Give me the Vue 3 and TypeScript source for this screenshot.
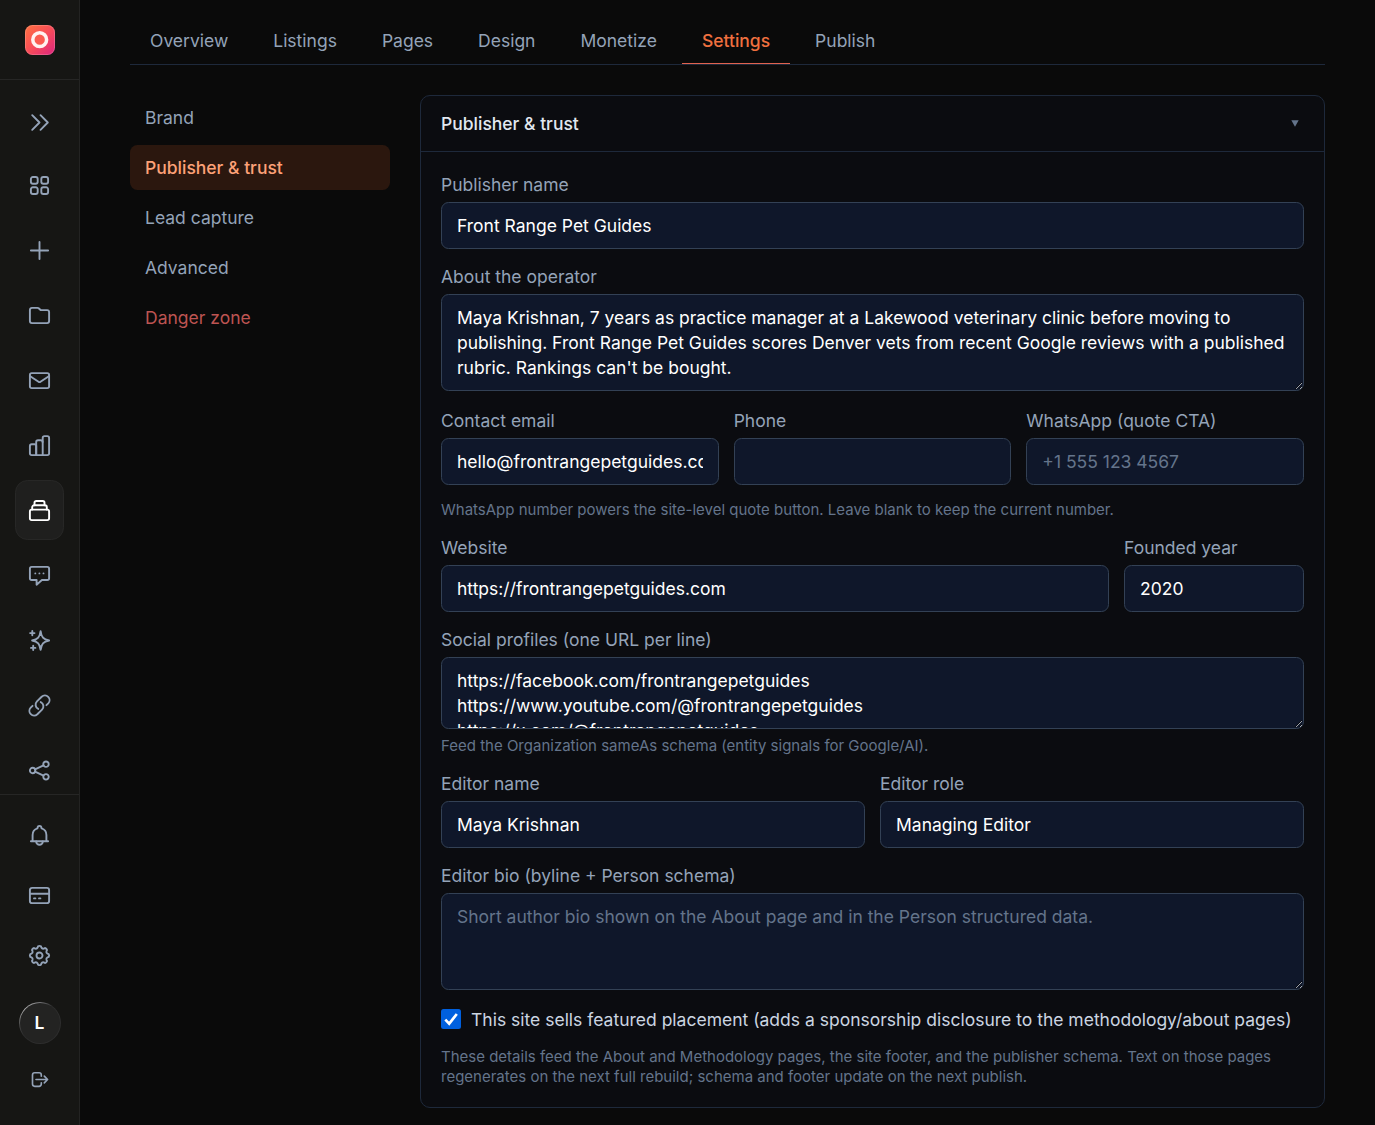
<script setup lang="ts">
import { ref } from 'vue'

interface NavIcon {
  name: string
  paths: string[]
  active?: boolean
}

// Eight-lobed gear outline around the centre of a 25-unit box
function gear(): string {
  const at = (deg: number, r: number) => {
    const a = (deg * Math.PI) / 180
    return `${(12.5 + r * Math.sin(a)).toFixed(2)} ${(12.5 - r * Math.cos(a)).toFixed(2)}`
  }
  let d = `M${at(-9, 9.3)}`
  for (let k = 0; k < 8; k++) {
    const c = k * 45
    d += `Q${at(c, 10.1)} ${at(c + 9, 9.3)}L${at(c + 13, 8.2)}Q${at(c + 22.5, 7)} ${at(c + 32, 8.2)}L${at(c + 36, 9.3)}`
  }
  return d + 'Z'
}

const mainNav: NavIcon[] = [
  {
    name: 'Dashboard',
    paths: [
      'M5.9 4h2.800a2 2 0 0 1 2 2v2.700a2 2 0 0 1-2 2H5.900a2 2 0 0 1-2-2V6a2 2 0 0 1 2-2Z',
      'M16.300 4h2.800a2 2 0 0 1 2 2v2.700a2 2 0 0 1-2 2h-2.800a2 2 0 0 1-2-2V6a2 2 0 0 1 2-2Z',
      'M5.900 14.300h2.800a2 2 0 0 1 2 2v2.700a2 2 0 0 1-2 2H5.900a2 2 0 0 1-2-2v-2.700a2 2 0 0 1 2-2Z',
      'M16.300 14.300h2.800a2 2 0 0 1 2 2v2.700a2 2 0 0 1-2 2h-2.800a2 2 0 0 1-2-2v-2.700a2 2 0 0 1 2-2Z',
    ],
  },
  { name: 'Create', paths: ['M12.500 3.900v17.200M3.900 12.500h17.200'] },
  {
    name: 'Projects',
    paths: ['M4.900 4.900h5.600c.6 0 1.100.2 1.500.6l1 1c.4.4.9.6 1.400.6h5.700a2 2 0 0 1 2 2v9a2 2 0 0 1-2 2H4.900a2 2 0 0 1-2-2V6.900a2 2 0 0 1 2-2Z'],
  },
  {
    name: 'Inbox',
    paths: [
      'M4.700 5.100h15.600a1.800 1.800 0 0 1 1.800 1.800v11.400a1.800 1.800 0 0 1-1.800 1.800H4.700a1.800 1.800 0 0 1-1.800-1.800V6.900a1.800 1.800 0 0 1 1.800-1.800Z',
      'M3.200 8.200l8.300 5.600a1.800 1.800 0 0 0 2 0l8.300-5.600',
    ],
  },
  {
    name: 'Analytics',
    paths: [
      'M4.700 11.300h2.900a1.600 1.600 0 0 1 1.600 1.600v9.200H4.700a1.800 1.800 0 0 1-1.800-1.800V13.100a1.800 1.800 0 0 1 1.800-1.800Z',
      'M9.200 22.100V9a1.800 1.800 0 0 1 1.800-1.800h2.900a1.700 1.700 0 0 1 1.700 1.700',
      'M9.200 22.100h6.500V4.900a1.800 1.800 0 0 1 1.800-1.800h2.800a1.800 1.800 0 0 1 1.800 1.800v15.400a1.800 1.800 0 0 1-1.800 1.800h-4.600',
    ],
  },
  {
    name: 'Sites',
    active: true,
    paths: [
      'M4.700 11.600h15.600a1.800 1.800 0 0 1 1.800 1.800v6.900a1.800 1.800 0 0 1-1.800 1.800H4.700a1.800 1.800 0 0 1-1.800-1.800v-6.900a1.800 1.800 0 0 1 1.800-1.800Z',
      'M5.200 11.600V9.200a1.900 1.900 0 0 1 1.900-1.900h10.800a1.900 1.900 0 0 1 1.900 1.900v2.400',
      'M7.500 7.300V4.700a1.700 1.700 0 0 1 1.700-1.700h6.600a1.700 1.700 0 0 1 1.700 1.700v2.600',
    ],
  },
  {
    name: 'Messages',
    paths: [
      'M4.700 3.900h15.600a1.800 1.800 0 0 1 1.800 1.800v9.500a1.800 1.800 0 0 1-1.800 1.800h-5.400l-5.300 4.700V17H4.700a1.800 1.800 0 0 1-1.800-1.800V5.700a1.800 1.800 0 0 1 1.800-1.800Z',
      'M8.300 10.400h.01M12.400 10.400h.01M16.500 10.400h.01',
    ],
  },
  {
    name: 'Assistant',
    paths: [
      'M13.600 3.100c.8 5.900 2.700 8.400 8.500 9.400-5.800 1-7.700 3.500-8.500 9.400-.8-5.900-2.700-8.400-8.500-9.400 5.800-1 7.700-3.500 8.500-9.400Z',
      'M5.300 2.900v4.400M3.100 5.100h4.400M6.200 17.700v4.400M4 19.900h4.400',
    ],
  },
  {
    name: 'Links',
    paths: ['M13.740 9.050a4.690 4.690 0 0 1 1.290 7.550l-4.690 4.690a4.690 4.690 0 0 1-6.630-6.630l1.830-1.830m13.910-.65 1.830-1.830a4.690 4.690 0 0 0-6.630-6.630l-4.690 4.690a4.690 4.690 0 0 0 1.290 7.550'],
  },
  {
    name: 'Share',
    paths: [
      'M2.900 12.500a2.700 2.700 0 1 0 5.400 0a2.700 2.700 0 1 0-5.400 0Z',
      'M16.300 6.200a2.700 2.700 0 1 0 5.400 0a2.700 2.700 0 1 0-5.400 0Z',
      'M16.300 18.800a2.700 2.700 0 1 0 5.400 0a2.700 2.700 0 1 0-5.400 0Z',
      'M8 11.300l8.500-3.900M8 13.700l8.500 3.900',
    ],
  },
]

const footNav: NavIcon[] = [
  {
    name: 'Notifications',
    paths: [
      'M3.900 18.200h17.200M5.600 18.200V12a7 7 0 0 1 4.800-6.600c.1-1.500.9-2.500 2.100-2.500s2 1 2.100 2.500A7 7 0 0 1 19.400 12v6.200',
      'M9.200 18.500a3.300 3.300 0 0 0 6.600 0',
    ],
  },
  {
    name: 'Billing',
    paths: [
      'M5.100 4.900h14.800a2.200 2.200 0 0 1 2.200 2.200v10.800a2.200 2.200 0 0 1-2.200 2.200H5.100a2.200 2.200 0 0 1-2.200-2.200V7.100a2.200 2.200 0 0 1 2.200-2.200Z',
      'M2.900 10.700h19.200M7 15.400h1.400M12 15.400h1.400',
    ],
  },
  { name: 'Settings', paths: [gear(), 'M9.500 12.500a3 3 0 1 0 6 0a3 3 0 1 0-6 0Z'] },
]

const tabs = ['Overview', 'Listings', 'Pages', 'Design', 'Monetize', 'Settings', 'Publish']
const activeTab = ref('Settings')
const sections = ['Brand', 'Publisher & trust', 'Lead capture', 'Advanced', 'Danger zone']
const activeSection = ref('Publisher & trust')

const form = ref({
  publisher: 'Front Range Pet Guides',
  about:
    "Maya Krishnan, 7 years as practice manager at a Lakewood veterinary clinic before moving to publishing. Front Range Pet Guides scores Denver vets from recent Google reviews with a published rubric. Rankings can't be bought.",
  email: 'hello@frontrangepetguides.com',
  phone: '',
  whatsapp: '',
  website: 'https://frontrangepetguides.com',
  founded: '2020',
  social:
    'https://facebook.com/frontrangepetguides\nhttps://www.youtube.com/@frontrangepetguides\nhttps://x.com/@frontrangepetguides',
  editor: 'Maya Krishnan',
  role: 'Managing Editor',
  bio: '',
  featured: true,
})
</script>

<template>
  <div class="app">
    <aside class="rail">
      <div class="brand">
        <svg class="logo" viewBox="0 0 30 30">
          <defs>
            <linearGradient id="logo-fill" x1="0" y1="0" x2="1" y2="1">
              <stop offset="0" stop-color="#ff7340" />
              <stop offset="0.5" stop-color="#f84c58" />
              <stop offset="1" stop-color="#dc2480" />
            </linearGradient>
          </defs>
          <rect width="30" height="30" rx="7.500" fill="url(#logo-fill)" />
          <rect x=".5" y=".5" width="29" height="29" rx="7" fill="none" stroke="#fff" stroke-opacity=".18" />
          <circle cx="14.700" cy="14.700" r="6.900" fill="#fb5c50" stroke="#fff2f0" stroke-width="3.500" />
        </svg>
      </div>
      <button class="rail-item toggle" aria-label="Expand">
        <svg class="icon" viewBox="0 0 25 25">
          <path d="M5.200 5.200l7.300 7.300-7.300 7.300M13.500 5.200l7.300 7.300-7.300 7.300" />
        </svg>
      </button>
      <nav class="rail-main">
        <button
          v-for="item in mainNav"
          :key="item.name"
          class="rail-item"
          :class="{ active: item.active }"
          :aria-label="item.name"
        >
          <svg class="icon" viewBox="0 0 25 25">
            <path v-for="d in item.paths" :key="d" :d="d" />
          </svg>
        </button>
      </nav>
      <div class="rail-foot">
        <button v-for="item in footNav" :key="item.name" class="rail-item" :aria-label="item.name">
          <svg class="icon" viewBox="0 0 25 25">
            <path v-for="d in item.paths" :key="d" :d="d" />
          </svg>
        </button>
        <div class="avatar"><span>L</span></div>
        <button class="logout" aria-label="Log out">
          <svg class="icon" viewBox="0 0 25 25">
            <path d="M14.300 9.200V7.900a2.200 2.200 0 0 0-2.200-2.200H7.700a2.200 2.200 0 0 0-2.200 2.200v9.200a2.200 2.200 0 0 0 2.200 2.200h4.400a2.200 2.200 0 0 0 2.200-2.200v-1.300M9 12.500h11.500M17.300 9.100l3.300 3.400-3.300 3.400" />
          </svg>
        </button>
      </div>
    </aside>

    <main class="page">
      <nav class="tabs">
        <button
          v-for="tab in tabs"
          :key="tab"
          class="tab"
          :class="{ active: tab === activeTab }"
          @click="activeTab = tab"
        >{{ tab }}</button>
      </nav>

      <div class="columns">
        <nav class="sections">
          <button
            v-for="s in sections"
            :key="s"
            class="section"
            :class="{ active: s === activeSection, danger: s === 'Danger zone' }"
            @click="activeSection = s"
          >{{ s }}</button>
        </nav>

        <section class="card">
          <header class="card-head">
            <h2>Publisher &amp; trust</h2>
            <svg class="caret" viewBox="0 0 8 7"><path d="M.3.300h7.400L4 6.700Z" /></svg>
          </header>
          <div class="card-body">
            <label class="field"><span>Publisher name</span><input v-model="form.publisher" type="text" /></label>
            <label class="field area">
              <span>About the operator</span>
              <textarea v-model="form.about" class="tall" spellcheck="false"></textarea>
            </label>
            <div class="row three">
              <label class="field"><span>Contact email</span><input v-model="form.email" type="text" /></label>
              <label class="field"><span>Phone</span><input v-model="form.phone" type="text" /></label>
              <label class="field">
                <span>WhatsApp (quote CTA)</span>
                <input v-model="form.whatsapp" type="text" placeholder="+1 555 123 4567" />
              </label>
            </div>
            <p class="hint">WhatsApp number powers the site-level quote button. Leave blank to keep the current number.</p>
            <div class="row site">
              <label class="field"><span>Website</span><input v-model="form.website" type="text" /></label>
              <label class="field"><span>Founded year</span><input v-model="form.founded" type="text" /></label>
            </div>
            <div class="group">
              <label class="field">
                <span>Social profiles (one URL per line)</span>
                <textarea v-model="form.social" class="short" spellcheck="false"></textarea>
              </label>
              <p class="hint">Feed the Organization sameAs schema (entity signals for Google/AI).</p>
            </div>
            <div class="row two">
              <label class="field"><span>Editor name</span><input v-model="form.editor" type="text" /></label>
              <label class="field"><span>Editor role</span><input v-model="form.role" type="text" /></label>
            </div>
            <label class="field area">
              <span>Editor bio (byline + Person schema)</span>
              <textarea
                v-model="form.bio"
                class="tall"
                placeholder="Short author bio shown on the About page and in the Person structured data."
              ></textarea>
            </label>
            <button class="check" role="checkbox" :aria-checked="form.featured" @click="form.featured = !form.featured">
              <span class="box" :class="{ on: form.featured }">
                <svg v-if="form.featured" viewBox="0 0 20 20"><path d="M4.300 10.600l3.900 4L15.800 5" /></svg>
              </span>
              <span>This site sells featured placement (adds a sponsorship disclosure to the methodology/about pages)</span>
            </button>
            <p class="hint">
              These details feed the About and Methodology pages, the site footer, and the publisher schema. Text on those pages
              regenerates on the next full rebuild; schema and footer update on the next publish.
            </p>
          </div>
        </section>
      </div>
    </main>
  </div>
</template>

<style>
body {
  background: #0a0a0a;
}
</style>

<style scoped>
.app,
.app * {
  box-sizing: border-box;
}
.app {
  display: flex;
  height: 1125px;
  overflow: hidden;
  background: #0a0a0a;
  color: #94a3b8;
  font-family: Inter, 'Liberation Sans', sans-serif;
  font-size: 17.5px;
  line-height: 25px;
}
button {
  border: 0;
  background: none;
  padding: 0;
  margin: 0;
  color: inherit;
  font: inherit;
  text-align: left;
}
.rail {
  display: flex;
  flex-direction: column;
  flex: none;
  width: 80px;
  background: #161614;
  border-right: 1px solid #232322;
}
.brand {
  height: 80px;
  flex: none;
  padding: 25px;
  border-bottom: 1px solid #262625;
}
.logo {
  display: block;
  width: 30px;
  height: 30px;
}
.rail-item {
  display: flex;
  align-items: center;
  justify-content: center;
  flex: none;
  width: 49px;
  height: 60px;
  border: 1px solid transparent;
  border-radius: 12.5px;
}
.rail-item.active {
  background: #1f1f1e;
  border-color: #272726;
  color: #fff;
}
.toggle {
  margin: 12px 15px 0;
}
.icon {
  display: block;
  flex: none;
  width: 25px;
  height: 25px;
  fill: none;
  stroke: currentColor;
  stroke-width: 1.9;
  stroke-linecap: round;
  stroke-linejoin: round;
}
.rail-main {
  display: flex;
  flex-direction: column;
  gap: 5px;
  flex: 1;
  min-height: 0;
  overflow: hidden;
  padding: 3px 15px 0;
}
.rail-foot {
  display: flex;
  flex-direction: column;
  align-items: center;
  flex: none;
  height: 331px;
  padding-top: 10px;
  border-top: 1px solid #262625;
}
.avatar {
  display: flex;
  flex: none;
  width: 42px;
  height: 42px;
  margin-top: 17px;
  padding: 1px;
  border-radius: 50%;
  background: conic-gradient(from 0deg, #77777a 0deg, #2e2e2e 35deg, #2c2c2c 235deg, #4a4a4a 265deg, #b5b5b5 310deg, #77777a 360deg);
}
.avatar span {
  flex: 1;
  border-radius: 50%;
  background: #232322;
  color: #fff;
  font-weight: 600;
  text-align: center;
  line-height: 40px;
}
.logout {
  margin-top: 23px;
}
.logout .icon {
  stroke-width: 1.65;
}
.page {
  flex: 1;
  min-width: 0;
  padding: 0 50px;
}
.tabs {
  display: flex;
  gap: 5px;
  height: 65px;
  padding-top: 16px;
  border-bottom: 1px solid #1e293b;
}
.tab {
  padding: 12px 20px 10px;
  border-bottom: 1px solid transparent;
}
.tab.active {
  color: #f0703f;
  border-bottom-color: #e0624f;
  font-weight: 500;
}
.columns {
  display: flex;
  align-items: flex-start;
  gap: 30px;
  padding-top: 30px;
}
.sections {
  display: flex;
  flex-direction: column;
  gap: 5px;
  flex: none;
  width: 260px;
}
.section {
  height: 45px;
  padding: 0 15px;
  border-radius: 7.5px;
}
.section.active {
  background: #2b170e;
  color: #fda177;
  font-weight: 500;
}
.section.danger {
  color: #bd5452;
}
.card {
  flex: 1;
  min-width: 0;
  height: 1013px;
  border: 1px solid #1e293b;
  border-radius: 10px;
  background: #0b0c10;
}
.card-head {
  display: flex;
  align-items: center;
  justify-content: space-between;
  height: 56px;
  padding: 0 25px 0 20px;
  border-bottom: 1px solid #1e293b;
}
.card-head h2 {
  margin: 0;
  color: #e2e8f0;
  font-size: 17.5px;
  font-weight: 500;
}
.caret {
  width: 8px;
  height: 7px;
  margin-top: -1px;
  fill: #64748b;
}
.card-body {
  display: flex;
  flex-direction: column;
  gap: 15px;
  padding: 20px;
}
.field {
  display: flex;
  flex-direction: column;
  gap: 5px;
  min-width: 0;
}
.field.area {
  padding-bottom: 2px;
}
.field input,
.field textarea {
  display: block;
  width: 100%;
  margin: 0;
  border: 1px solid #334155;
  border-radius: 7.5px;
  outline: 0;
  background: #0f172a;
  color: #fff;
  font: inherit;
  padding: 10px 15px;
}
.field input {
  height: 47px;
}
.field textarea {
  overflow: hidden;
  resize: vertical;
  color-scheme: dark;
}
.tall {
  height: 97px;
}
.short {
  height: 72px;
}
.field ::placeholder {
  color: #64748b;
  opacity: 1;
}
.row {
  display: grid;
  gap: 15px;
}
.three {
  grid-template-columns: repeat(3, minmax(0, 1fr));
}
.site {
  grid-template-columns: minmax(0, 1fr) 180px;
}
.two {
  grid-template-columns: repeat(2, minmax(0, 1fr));
}
.hint {
  margin: 0;
  color: #64748b;
  font-size: 15px;
  line-height: 20px;
}
.group {
  display: flex;
  flex-direction: column;
  gap: 7px;
}
.check {
  display: flex;
  align-items: flex-start;
  gap: 10px;
  color: #cbd5e1;
  white-space: nowrap;
}
.box {
  flex: none;
  width: 20px;
  height: 20px;
  margin-top: 2px;
  border: 1px solid #64748b;
  border-radius: 2.5px;
}
.box.on {
  border: 0;
  background: #0060df;
}
.box svg {
  display: block;
  fill: none;
  stroke: #fff;
  stroke-width: 2.7;
}
</style>
